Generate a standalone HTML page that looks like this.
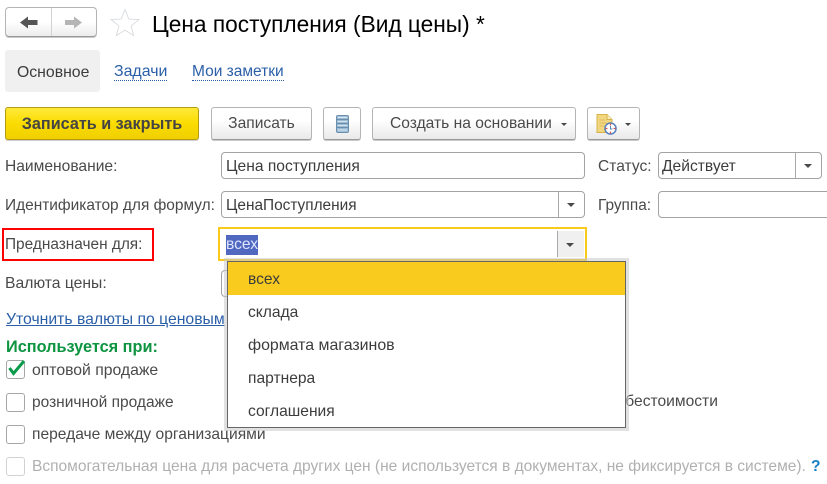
<!DOCTYPE html>
<html>
<head>
<meta charset="utf-8">
<style>
html,body{margin:0;padding:0;background:#fff}
body{width:827px;height:484px;overflow:hidden;position:relative;font-family:"Liberation Sans",sans-serif;font-size:15.6px;color:#4a4a4a}
.a{position:absolute;box-sizing:border-box}
.t{position:absolute;white-space:nowrap;line-height:18px}
.btn{position:absolute;box-sizing:border-box;border:1px solid #b4b4b4;border-bottom-color:#9a9a9a;border-radius:3px;background:linear-gradient(#fff 40%,#e9e9e9);box-shadow:0 1px 0 #c8c8c8;text-align:center;line-height:32px}
.inp{position:absolute;box-sizing:border-box;border:1px solid #a3a3a3;border-radius:4px;background:#fff;height:27px}
.div{position:absolute;top:0;bottom:0;width:1px;background:#a9a9a9}
.arr{position:absolute;width:0;height:0;border-left:4px solid transparent;border-right:4px solid transparent;border-top:4px solid #4a4a4a}
.cb{position:absolute;box-sizing:border-box;left:6px;width:19px;height:19px;border:1px solid #a6a6a6;border-radius:3px;background:#fff}
.lnk{color:#2a5fa8;border-bottom:1px dotted #2a5fa8;line-height:16px}
.it{position:absolute;left:20px;color:#3c3c3c;white-space:nowrap;line-height:18px}
</style>
</head>
<body>
<!-- nav -->
<div class="a" style="left:5px;top:7px;width:92px;height:30px;border:1px solid #b4b4b4;border-bottom-color:#999;border-radius:4px;background:linear-gradient(#fff 50%,#ececec);box-shadow:0 1px 0 #c8c8c8"></div>
<div class="a" style="left:51px;top:8px;width:1px;height:28px;background:#d2d2d2"></div>
<svg class="a" style="left:0;top:0" width="150" height="40">
<path d="M20 22.5 L28 16.5 V20 H37.5 V25 H28 V28.5 Z" fill="#555"/>
<path d="M82 22.5 L74 16.5 V20 H65 V25 H74 V28.5 Z" fill="#b5b5b5"/>
<path d="M125 9.5 L128.8 19 L139 19.6 L131 26 L133.7 35.5 L125 30.2 L116.3 35.5 L119 26 L111 19.6 L121.2 19 Z" fill="#fff" stroke="#d3d7db" stroke-width=".8"/>
</svg>
<div class="t" style="left:152px;top:10px;font-size:22.7px;line-height:28px;color:#000">Цена поступления (Вид цены) *</div>
<!-- tabs -->
<div class="a" style="left:5px;top:50px;width:95px;height:42px;background:#f0f0f0;border-radius:3px"></div>
<div class="t" style="left:17px;top:64px;color:#3c3c3c;font-size:15.8px">Основное</div>
<div class="t lnk" style="left:114px;top:64px;font-size:15.9px">Задачи</div>
<div class="t lnk" style="left:192px;top:64px;font-size:15.5px">Мои заметки</div>
<!-- toolbar -->
<div class="a" style="left:5px;top:107px;width:194px;height:33px;border:1px solid #b49b10;border-radius:3px;background:linear-gradient(#ffe93a,#fbdc00 50%,#efcf00);text-align:center;line-height:32px;font-size:16.2px;font-weight:bold;color:#444;box-shadow:0 1px 0 #ccc">Записать и закрыть</div>
<div class="btn" style="left:211px;top:107px;width:101px;height:33px">Записать</div>
<div class="btn" style="left:323px;top:107px;width:38px;height:33px"></div>
<svg class="a" style="left:336px;top:115px" width="13" height="18">
<rect x=".5" y=".5" width="12" height="17" rx="1.5" fill="#a3c1d9" stroke="#6a8fae"/>
<path d="M1 4.5H12M1 8.5H12M1 12.5H12" stroke="#6a8fae" stroke-width="1.2"/>
<path d="M2 2.5H11M2 6.5H11M2 10.5H11M2 15H11" stroke="#d5e5f0"/>
</svg>
<div class="btn" style="left:372px;top:107px;width:204px;height:33px;text-align:left;padding-left:17px">Создать на основании</div>
<div class="arr" style="left:561px;top:123px;border-left-width:3px;border-right-width:3px;border-top-width:3px"></div>
<div class="btn" style="left:587px;top:107px;width:53px;height:33px"></div>
<svg class="a" style="left:595px;top:112px" width="24" height="24">
<path d="M2 2.5H12L17 7.5V20.5H2Z" fill="#f2d77e" stroke="#d6b34a"/>
<path d="M12 2.5V7.5H17" fill="#fbeebb" stroke="#d6b34a"/>
<path d="M4.5 8H10M4.5 11H12M4.5 14H9" stroke="#d9bb62"/>
<circle cx="15.5" cy="16.5" r="5.5" fill="#fff" stroke="#5b84bd" stroke-width="1.6"/>
<path d="M15.5 11.5v2M15.5 19.5v2M10.5 16.5h2M18.5 16.5h2" stroke="#d9534f" stroke-width="1.3"/>
<path d="M15.5 14v3h2" stroke="#5b84bd" fill="none"/>
</svg>
<div class="arr" style="left:625px;top:123px;border-left-width:3px;border-right-width:3px;border-top-width:3px"></div>
<!-- row 1 -->
<div class="t" style="left:5px;top:158px">Наименование:</div>
<div class="inp" style="left:221px;top:152px;width:364px"></div>
<div class="t" style="left:226px;top:158px;color:#3c3c3c">Цена поступления</div>
<div class="t" style="left:598px;top:158px">Статус:</div>
<div class="inp" style="left:658px;top:152px;width:164px"><div class="div" style="left:136px"></div><div class="arr" style="left:145px;top:11px"></div></div>
<div class="t" style="left:662px;top:158px;color:#3c3c3c">Действует</div>
<!-- row 2 -->
<div class="t" style="left:5px;top:197px;font-size:15.45px">Идентификатор для формул:</div>
<div class="inp" style="left:221px;top:191px;width:364px"><div class="div" style="left:336px"></div><div class="arr" style="left:345px;top:11px"></div></div>
<div class="t" style="left:226px;top:197px;color:#3c3c3c;font-size:15.4px">ЦенаПоступления</div>
<div class="t" style="left:598px;top:197px;font-size:15.4px">Группа:</div>
<div class="inp" style="left:658px;top:191px;width:180px"></div>
<!-- row 3 -->
<div class="a" style="left:2px;top:228px;width:152px;height:33px;border:2px solid #f00"></div>
<div class="t" style="left:5px;top:236px;font-size:15.4px">Предназначен для:</div>
<div class="a" style="left:218px;top:227px;width:369px;height:34px;border:2px solid #f9c91c;background:#fff"></div>
<div class="a" style="left:557px;top:231px;width:27px;height:26px;background:#f0f0f0;border-left:1px solid #a9a9a9"></div>
<div class="arr" style="left:566px;top:243px"></div>
<div class="t" style="left:226px;top:235px;height:20px;line-height:20px;background:#5068c0;color:#dfe6ff">всех</div>
<!-- row 4 -->
<div class="t" style="left:5px;top:275px;font-size:15.7px">Валюта цены:</div>
<div class="a" style="left:221px;top:270px;width:20px;height:27px;border:1px solid #a3a3a3;border-radius:4px"></div>
<div class="t" style="left:6px;top:311px;color:#2a5fa8;text-decoration:underline;font-size:15.75px">Уточнить валюты по ценовым</div>
<div class="t" style="left:6px;top:338px;color:#0c9440;font-weight:bold;font-size:16.3px">Используется при:</div>
<!-- checkboxes -->
<div class="cb" style="top:360px"></div>
<svg class="a" style="left:6px;top:358px" width="22" height="22"><path d="M3.5 10L7.5 15.5L18 3" fill="none" stroke="#0a9a4a" stroke-width="3"/></svg>
<div class="t" style="left:32px;top:362px;font-size:15.75px">оптовой продаже</div>
<div class="cb" style="top:393px"></div>
<div class="t" style="left:32px;top:394px;font-size:15.5px">розничной продаже</div>
<div class="cb" style="top:425px"></div>
<div class="t" style="left:32px;top:426px">передаче между организациями</div>
<div class="cb" style="top:457px;border-color:#d2d2d2"></div>
<div class="t" style="left:32px;top:458px;color:#b0b0b0;font-size:15.54px">Вспомогательная цена для расчета других цен (не используется в документах, не фиксируется в системе).</div>
<div class="t" style="left:811px;top:458px;color:#1a7fc0;font-weight:bold">?</div>
<div class="t" style="left:609px;top:393px">себестоимости</div>
<!-- popup -->
<div class="a" style="left:227px;top:261px;width:399px;height:167px;background:#fff;border:1px solid #666;box-shadow:0 0 0 3px rgba(200,200,200,.55)">
<div class="a" style="left:0;top:0;width:397px;height:33px;background:#f9cb1e"></div>
<div class="it" style="top:9px">всех</div>
<div class="it" style="top:42px">склада</div>
<div class="it" style="top:75px;font-size:15.9px">формата магазинов</div>
<div class="it" style="top:108px">партнера</div>
<div class="it" style="top:141px">соглашения</div>
</div>
</body>
</html>
